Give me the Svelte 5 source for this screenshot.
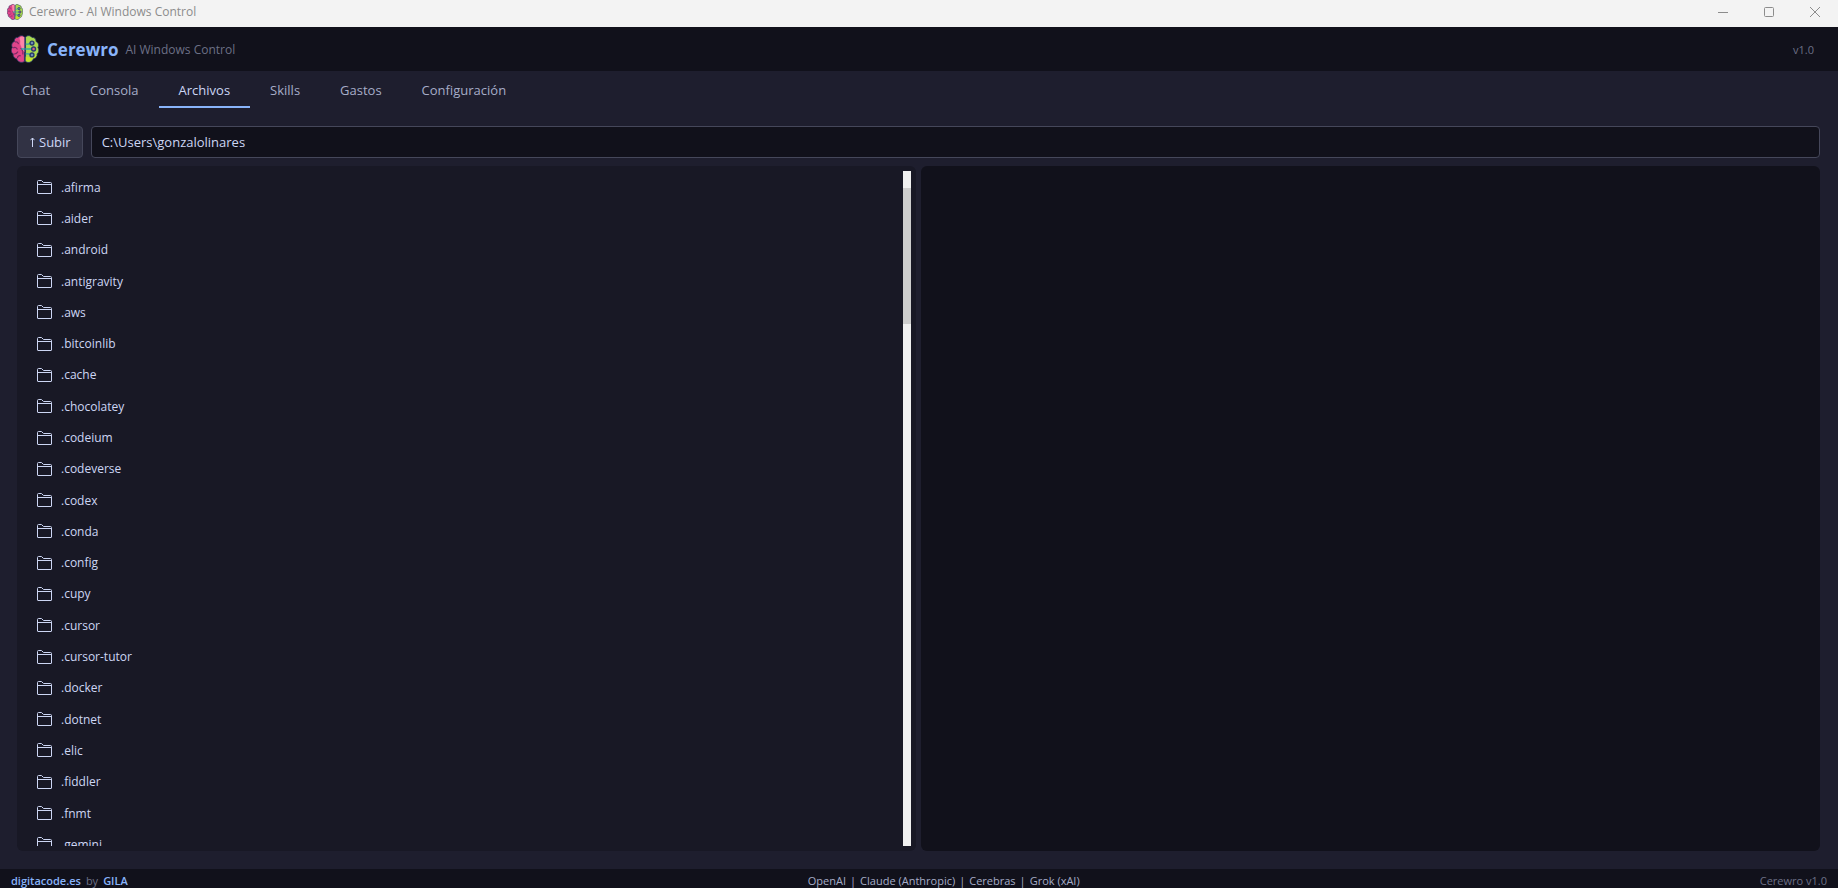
<script lang="ts">
  const tabs = ['Chat', 'Consola', 'Archivos', 'Skills', 'Gastos', 'Configuración'];

  const folders = [
    '.afirma', '.aider', '.android', '.antigravity', '.aws', '.bitcoinlib',
    '.cache', '.chocolatey', '.codeium', '.codeverse', '.codex', '.conda',
    '.config', '.cupy', '.cursor', '.cursor-tutor', '.docker', '.dotnet',
    '.elic', '.fiddler', '.fnmt', '.gemini',
  ];

  const providers = ['OpenAI', 'Claude (Anthropic)', 'Cerebras', 'Grok (xAI)'];

  let activeTab = $state('Archivos');
  let selected = $state('');
  let path = $state('C:\\Users\\gonzalolinares');

  function goUp() {
    const cut = path.lastIndexOf('\\');
    if (cut > 2) path = path.slice(0, cut);
  }
</script>

{#snippet brain(cls: string)}
  <svg class={cls} viewBox="1 1 26 26" aria-hidden="true">
    <path
      d="M13.500 3C12 1 9 1.200 7.600 3.200C5 3 3.600 5 4.200 7C1.800 7.800 1 10.500 2.200 12.500C.600 14.500 1 17.500 3 18.500C2.600 21 4.200 22.800 6.200 23C7 26 11 27.600 13.500 25.500Z"
      fill="#e0458a" stroke="#26355d" stroke-width=".8"
    />
    <path d="M13.500 3C11 1.500 8.500 2.500 9 5C10.500 7 8.500 9 10.500 11.500C10 14 12 16 13.500 17Z" fill="#ff86a8" />
    <path
      d="M4.500 7.500C6 7 7.500 7.500 8 9.500M3 13C4.500 12 6 12.500 7 14.500M3.500 18.500C5 19 6.500 18 7.500 16.500M7 22.500C7 21 8.500 19.500 10 20.500M10 13L12 16V19"
      fill="none" stroke="#7d2a66" stroke-width="1.100"
    />
    <path
      d="M14.500 3C16 1 19 1.200 20.400 3.200C23 3 24.600 5 24.200 7C26.500 8 27.300 10.500 26 12.500C27.500 14.500 27 17.500 25.200 18.500C25.500 21 24 22.800 21.800 23C21 26 17 27.600 14.500 25.500Z"
      fill="#a9d94f" stroke="#26355d" stroke-width=".8"
    />
    <path d="M14.500 21C18 22.500 21.500 22.500 24.700 19C24.500 22 22.500 22.500 21.300 22.500C20.500 25 17.500 26.800 14.500 25Z" fill="#c4e52c" />
    <path d="M14.500 9.500H17L20.500 8M10.500 14H22M14.500 18.500H17L20.500 19.500" fill="none" stroke="#31a8a2" stroke-width="1.300" />
    <g fill="#6f8fb0" stroke="#273c6e" stroke-width="1.300">
      <circle cx="20.500" cy="8.500" r="1.800" />
      <circle cx="22" cy="14" r="1.800" fill="#d2648c" />
      <circle cx="20.500" cy="19.500" r="1.800" />
    </g>
    <path d="M14 2.500V26" stroke="#31447c" stroke-width=".6" />
  </svg>
{/snippet}

<div class="window">
  <div class="titlebar">
    {@render brain('titlebar-icon')}
    <span class="titlebar-text">Cerewro - AI Windows Control</span>
    <div class="window-controls">
      <button aria-label="Minimizar">
        <svg viewBox="0 0 10 10"><path d="M0 5.500H10" /></svg>
      </button>
      <button aria-label="Maximizar">
        <svg viewBox="0 0 10 10"><rect x=".5" y=".5" width="9" height="9" rx="1" /></svg>
      </button>
      <button aria-label="Cerrar">
        <svg viewBox="0 0 10 10"><path d="M0 0L10 10M10 0L0 10" /></svg>
      </button>
    </div>
  </div>

  <header class="header">
    {@render brain('logo')}
    <h1>Cerewro</h1>
    <span class="subtitle">AI Windows Control</span>
    <span class="version">v1.0</span>
  </header>

  <nav class="tabs">
    {#each tabs as tab}
      <button class="tab" class:active={tab === activeTab} onclick={() => (activeTab = tab)}>{tab}</button>
    {/each}
  </nav>

  <main class="files">
    <div class="path-bar">
      <button class="up-button" onclick={goUp}>
        <svg class="arrow" viewBox="0 0 5 10" aria-hidden="true"><path d="M2.500 10V1M.5 3.200L2.500 1L4.500 3.200" /></svg>
        Subir
      </button>
      <input class="path-input" type="text" aria-label="Ruta" bind:value={path} />
    </div>

    <div class="panels">
      <section class="browser">
        <div class="list-view">
          <ul class="list">
            {#each folders as folder}
              <li>
                <button class="row" class:selected={folder === selected} onclick={() => (selected = folder)}>
                  <svg class="folder" viewBox="0 0 15 14" aria-hidden="true">
                    <path d="M.5 13V1.500Q.5 .5 1.500 .5H4.500L6.500 2.500H13.500Q14.500 2.500 14.500 3.500V13Q14.500 13.500 14 13.500H1Q.5 13.500 .5 13ZM.5 4.500H14.500" />
                  </svg>
                  {folder}
                </button>
              </li>
            {/each}
          </ul>
        </div>
        <div class="scrollbar"><div class="thumb"></div></div>
      </section>
      <section class="preview" aria-label="Vista previa"></section>
    </div>
  </main>

  <footer class="footer">
    <div class="credits"><a href="#digitacode">digitacode.es</a><span>by</span><a href="#gila">GILA</a></div>
    <div class="providers">
      {#each providers as provider, i}
        {#if i > 0}<span>|</span>{/if}
        <span>{provider}</span>
      {/each}
    </div>
    <div class="footer-version">Cerewro v1.0</div>
  </footer>
</div>

<style>
  :global(body) {
    background: #1e1e2e;
  }

  .window {
    display: flex;
    flex-direction: column;
    height: 100vh;
    overflow: hidden;
    background: #1e1e2e;
    color: #cdd6f4;
    font-family: 'Segoe UI', 'Open Sans', 'Noto Sans', sans-serif;
    font-size: 12px;
  }

  .window * {
    box-sizing: border-box;
  }

  button,
  input {
    font: inherit;
    color: inherit;
    border: 0;
    margin: 0;
  }

  button {
    background: none;
    padding: 0;
  }

  .titlebar {
    display: flex;
    align-items: center;
    flex: none;
    height: 27px;
    padding: 0 0 4px 7px;
    background: #f3f3f3;
    color: #8c8c8c;
  }

  .titlebar-icon {
    width: 16px;
    height: 16px;
    margin-right: 6px;
  }

  .window-controls {
    display: flex;
    margin-left: auto;
  }

  .window-controls button {
    display: grid;
    place-items: center;
    width: 46px;
    height: 23px;
  }

  .window-controls svg {
    width: 10px;
    height: 10px;
    overflow: visible;
    fill: none;
    stroke: #8c8c8c;
  }

  .header {
    display: flex;
    align-items: center;
    flex: none;
    height: 44px;
    padding: 0 24px 0 11px;
    background: #11111b;
    color: #6c7086;
  }

  .logo {
    width: 28px;
    height: 28px;
    margin-right: 8px;
  }

  h1 {
    margin: 0 7px 0 0;
    color: #89b4fa;
    font-size: 17px;
    font-weight: 700;
  }

  .version {
    margin-left: auto;
    font-size: 11px;
  }

  .tabs {
    display: flex;
    flex: none;
    height: 37px;
    padding-left: 2px;
  }

  .tab {
    padding: 2px 20px 0;
    border-bottom: 2px solid transparent;
    color: #a6adc8;
    font-size: 13px;
  }

  .tab.active {
    border-bottom-color: #89b4fa;
    color: #cdd6f4;
  }

  .files {
    display: flex;
    flex: 1;
    flex-direction: column;
    gap: 8px;
    min-height: 0;
    padding: 18px 18px 18px 17px;
  }

  .path-bar {
    display: flex;
    flex: none;
    gap: 8px;
    height: 32px;
  }

  .up-button {
    display: flex;
    align-items: center;
    gap: 4px;
    padding: 0 11px 0 12px;
    border: 1px solid #45475a;
    border-radius: 4px;
    background: #313244;
    font-size: 13px;
    white-space: nowrap;
  }

  .arrow {
    width: 5px;
    height: 10px;
    fill: none;
    stroke: #cdd6f4;
  }

  .path-input {
    flex: 1;
    min-width: 0;
    padding: 0 10px;
    border: 1px solid #45475a;
    border-radius: 4px;
    outline: 0;
    background: #11111b;
    font-size: 13px;
  }

  .panels {
    display: grid;
    flex: 1;
    grid-template-columns: 1fr 1fr;
    gap: 5px;
    min-height: 0;
  }

  .browser {
    display: flex;
    min-height: 0;
    padding: 5px;
    border-radius: 6px;
    background: #181825;
  }

  .list-view {
    flex: 1;
    overflow: hidden;
  }

  .list {
    display: grid;
    grid-auto-rows: 1fr;
    height: 102%;
    margin: 0;
    padding: 0;
    list-style: none;
  }

  .row {
    display: flex;
    align-items: center;
    gap: 9px;
    width: 100%;
    height: 100%;
    padding: 1px 15px 0;
    text-align: left;
  }

  .row.selected {
    background: #313244;
  }

  .folder {
    width: 15px;
    height: 14px;
    fill: none;
    stroke: #cdd6f4;
  }

  .scrollbar {
    width: 8px;
    padding-top: 17px;
    background: #f0f0f0;
  }

  .thumb {
    height: 136px;
    background: #cdcdcd;
  }

  .preview {
    border-radius: 6px;
    background: #11111b;
  }

  .footer {
    display: flex;
    flex: none;
    justify-content: space-between;
    height: 19px;
    padding: 4px 11px 0;
    overflow: hidden;
    background: #11111b;
    color: #6c7086;
    font-size: 11px;
    line-height: 16px;
  }

  .credits {
    display: flex;
    gap: 5px;
  }

  .credits a {
    color: #89b4fa;
    font-weight: 600;
    text-decoration: none;
  }

  .providers {
    display: flex;
    gap: 4px;
    color: #a6adc8;
  }
</style>
